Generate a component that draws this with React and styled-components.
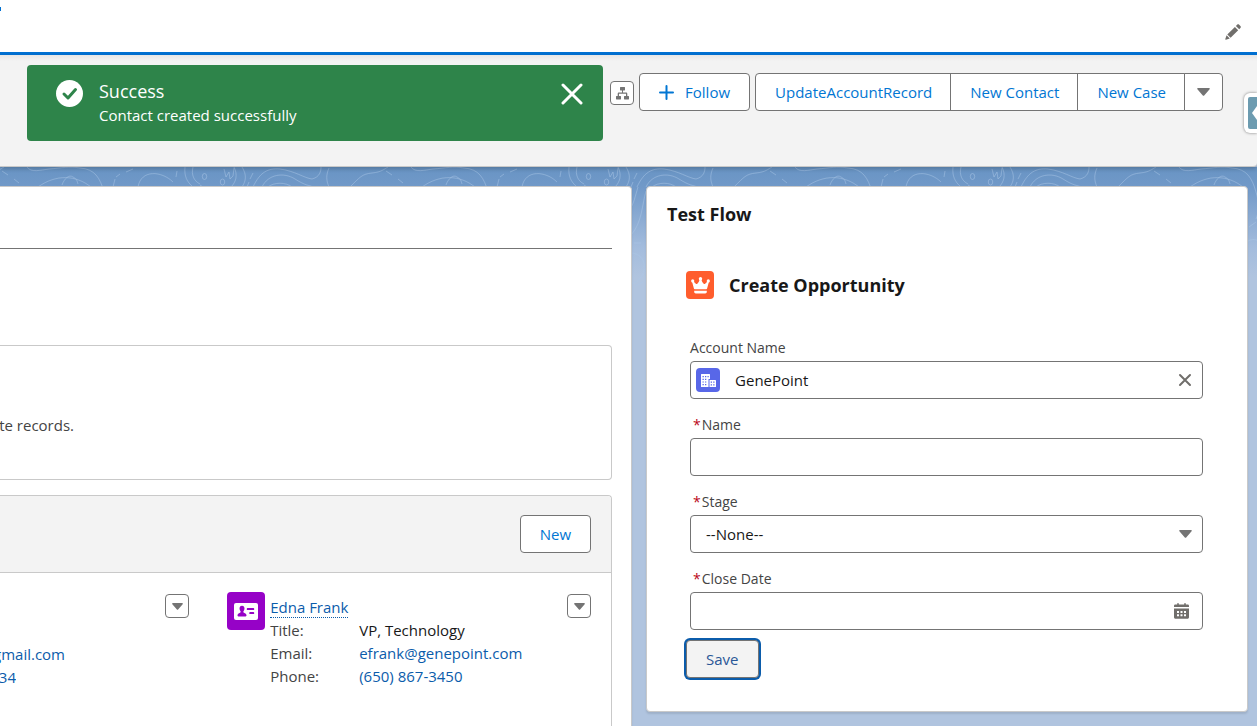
import React from "react";
import styled, { createGlobalStyle, css } from "styled-components";

const GlobalStyle = createGlobalStyle`
  * { box-sizing: border-box; }
  body {
    margin: 0;
    font-family: "Segoe UI", "Open Sans", "Noto Sans", sans-serif;
    font-size: 15px;
    line-height: 24px;
    color: #181818;
    background: #b0c4df;
  }
  button, input, select { font: inherit; color: inherit; }
  button { cursor: pointer; }
  svg { display: block; }
`;

const Page = styled.div`
  min-height: 100vh;
  display: flex;
  flex-direction: column;
  position: relative;
  overflow: hidden;
`;

const NavBar = styled.header`
  height: 55px;
  display: flex;
  justify-content: space-between;
  background: #fff;
  border-bottom: 3px solid #0070d2;
`;

const TabMark = styled.span`
  width: 1px;
  height: 4px;
  margin-top: 7px;
  background: #0070d2;
`;

const PlainButton = styled.button`
  display: flex;
  align-items: center;
  justify-content: center;
  padding: 0;
  border: 0;
  background: none;
  color: ${(p) => p.$color || "#706e6b"};
`;

const EditNav = styled(PlainButton)`
  width: 16px;
  height: 16px;
  margin: 24px 16px 0 0;
`;

const RecordHeader = styled.section`
  height: 112px;
  display: flex;
  justify-content: flex-end;
  align-items: flex-start;
  gap: 5px;
  padding: 18px 34px 0 0;
  position: relative;
  z-index: 1;
  background: linear-gradient(#e6e6e6, #f3f3f3 6px);
  border-bottom: 1px solid #c9c9c9;
  border-bottom-right-radius: 4px;
  box-shadow: 0 2px 4px rgba(0, 0, 0, 0.2);
`;

const buttonFace = css`
  background: #fff;
  border: 1px solid #747474;
  border-radius: 4px;
`;

const IconButton = styled.button`
  ${buttonFace}
  width: 24px;
  height: 24px;
  padding: 0;
  display: flex;
  flex: none;
  align-items: center;
  justify-content: center;
  color: #747474;
`;

const HierarchyButton = styled(IconButton)`
  margin-top: 8px;
`;

const Button = styled.button`
  ${buttonFace}
  height: 38px;
  padding: 0 19px;
  display: flex;
  align-items: center;
  gap: 11px;
  color: #0176d3;
  white-space: nowrap;
`;

const ButtonGroup = styled.div`
  display: flex;

  ${Button} {
    border-radius: 0;
    margin-left: -1px;
    padding: 0 18px 0 19px;
  }
  ${Button}:first-child {
    margin-left: 0;
    border-radius: 4px 0 0 4px;
  }
  ${Button}:last-child {
    border-radius: 0 4px 4px 0;
    padding: 0 12px;
    color: #747474;
  }
`;

const Toast = styled.div`
  position: absolute;
  z-index: 3;
  top: 65px;
  left: 27px;
  width: 576px;
  height: 76px;
  display: flex;
  align-items: flex-start;
  padding: 15px 20px 0 29px;
  border-radius: 4px;
  background: #2e844a;
  color: #fff;
`;

const ToastText = styled.div`
  flex: 1;
  margin-left: 16px;
`;

const ToastTitle = styled.h2`
  margin: 0;
  font-size: 18px;
  line-height: 23px;
  font-weight: 400;
`;

const ToastMessage = styled.p`
  margin: 0;
`;

const ToastClose = styled(PlainButton)`
  width: 22px;
  height: 28px;
`;

const SideTab = styled.button`
  position: absolute;
  z-index: 3;
  top: 93px;
  right: 0;
  width: 13px;
  height: 40px;
  padding: 4px 0 4px 4px;
  border: 0;
  border-radius: 6px 0 0 6px;
  background: #fff;
  box-shadow: 0 0 3px rgba(0, 0, 0, 0.5);
`;

const SideTabFace = styled.span`
  display: flex;
  align-items: center;
  height: 32px;
  border-radius: 2px 0 0 2px;
  background: #6c9bb0;
`;

const Main = styled.main`
  flex: 1;
  display: grid;
  grid-template-columns: minmax(0, 21fr) minmax(0, 20fr);
  gap: 14px;
  padding: 19px 9px 0 0;
  position: relative;
  background: linear-gradient(#6894c4, #7199c8 20px, #a3bcdd 80px, #b0c4df 110px);
`;

const Backdrop = styled.svg`
  position: absolute;
  top: 0;
  left: 0;
  width: 100%;
  height: 130px;
`;

const Card = styled.section`
  position: relative;
  background: #fff;
  border: 1px solid #c9c9c9;
  border-radius: 4px;
  box-shadow: 0 2px 2px rgba(0, 0, 0, 0.1);
`;

const DetailCard = styled(Card)`
  display: flex;
  flex-direction: column;
  padding-right: 19px;
  border-left: 0;
  border-bottom: 0;
  border-radius: 0 4px 0 0;
`;

const TabRule = styled.div`
  height: 62px;
  border-bottom: 1px solid #747474;
`;

const NoticeBox = styled.div`
  height: 135px;
  margin: 96px 0 15px;
  padding-top: 67px;
  border: 1px solid #c9c9c9;
  border-left: 0;
  border-radius: 0 4px 4px 0;
  color: #444;
`;

const Clipped = styled.div`
  display: flex;
  justify-content: flex-end;
  width: ${(p) => p.$width}px;
  height: 23px;
  overflow: hidden;
  white-space: nowrap;
`;

const RelatedList = styled.div`
  flex: 1;
  border: 1px solid #c9c9c9;
  border-width: 1px 1px 0 0;
  border-radius: 0 4px 0 0;
`;

const RelatedHeader = styled.div`
  display: flex;
  justify-content: flex-end;
  padding: 19px 20px;
  background: #f3f3f3;
  border-bottom: 1px solid #c9c9c9;
  border-radius: 0 4px 0 0;
`;

const Tiles = styled.div`
  display: grid;
  grid-template-columns: minmax(0, 13fr) minmax(0, 25fr);
  gap: 38px;
  padding: 19px 20px 0 0;
`;

const Tile = styled.article`
  display: flex;
  align-items: flex-start;
  justify-content: space-between;
`;

const TileMenu = styled(IconButton)`
  margin-top: 2px;
`;

const CutColumn = styled.div`
  padding-top: 50px;
`;

const ObjectBadge = styled.span`
  flex: none;
  display: flex;
  align-items: center;
  justify-content: center;
  width: ${(p) => p.$size}px;
  height: ${(p) => p.$size}px;
  border-radius: 4px;
  background: ${(p) => p.$color};
`;

const ContactInfo = styled.div`
  flex: 1;
  min-width: 0;
  padding: 3px 0 0 5px;
`;

const Link = styled.a`
  color: #0b5cab;
  text-decoration: none;
`;

const ContactName = styled(Link)`
  display: inline-block;
  line-height: 20px;
  border-bottom: 1px dotted #0b5cab;
`;

const Facts = styled.dl`
  display: grid;
  grid-template-columns: 84px 1fr;
  column-gap: 5px;
  margin: 0;
  line-height: 23px;

  dt { color: #444; }
  dd { margin: 0; }
`;

const NameLine = styled.div`
  height: 24px;
`;

const FlowCard = styled(Card)`
  align-self: start;
  margin-bottom: 14px;
  padding: 14px 40px 33px 39px;
`;

const CardTitle = styled.h2`
  margin: 0 0 44px -19px;
  font-size: 18px;
  line-height: 26px;
  font-weight: 700;
`;

const FlowHeading = styled.div`
  display: flex;
  align-items: center;
  gap: 15px;
  margin-bottom: 37px;

  h3 {
    margin: 0;
    font-size: 18px;
    line-height: 28px;
    font-weight: 700;
  }
`;

const Field = styled.div`
  margin: 0 4px 14px;
`;

const Label = styled.label`
  display: block;
  height: 25px;
  font-size: 14px;
  line-height: 24px;
  color: #444;
  padding-left: ${(p) => (p.$required ? 3 : 0)}px;
`;

const Required = styled.abbr`
  margin-right: 1px;
  color: #ba0517;
`;

const Control = styled.div`
  ${buttonFace}
  position: relative;
  display: flex;
  align-items: center;
  height: 38px;
  padding: 0 ${(p) => p.$right || 0}px 0 ${(p) => p.$left || 0}px;
`;

const TextInput = styled.input`
  flex: 1;
  min-width: 0;
  height: 36px;
  padding: 0 15px;
  border: 0;
  outline: 0;
  background: none;
`;

const Select = styled.select`
  flex: 1;
  height: 36px;
  padding: 0 15px;
  border: 0;
  outline: 0;
  appearance: none;
  background: none;
`;

const SelectArrow = styled.span`
  position: absolute;
  right: 10px;
  color: #747474;
  pointer-events: none;
`;

const SaveButton = styled(Button)`
  margin-top: -4px;
  background: #f3f3f3;
  color: #2a5797;
  box-shadow: 0 0 0 2px #0b5cab;
`;

const Caret = ({ width = 11 }) => (
  <svg width={width} height={Math.round(width * 0.62)} viewBox="0 0 13 8" fill="currentColor" aria-hidden="true">
    <path d="M1 0h11c.8 0 1.100.6.600 1.200L7.200 7.400c-.4.500-1 .5-1.400 0L.4 1.200C-.1.600.2 0 1 0z" />
  </svg>
);

const Cross = ({ size, stroke }) => (
  <svg width={size} height={size} viewBox={`0 0 ${size} ${size}`} aria-hidden="true">
    <path
      d={`M2 2L${size - 2} ${size - 2}M${size - 2} 2L2 ${size - 2}`}
      stroke="currentColor"
      strokeWidth={stroke}
      strokeLinecap="round"
    />
  </svg>
);

const PencilIcon = () => (
  <svg width="16" height="16" viewBox="0 0 16 16" fill="currentColor" aria-hidden="true">
    <path d="M9.900 2.900l3.300 3.300-7.600 7.600-3.300-3.300zM10.900 1.900l1.200-1.200c.6-.6 1.500-.6 2.100 0l1.200 1.200c.6.600.6 1.500 0 2.100l-1.200 1.200zM1.600 11.300l3.200 3.200-3.900 1.200c-.4.100-.7-.2-.6-.6z" />
  </svg>
);

const CheckIcon = () => (
  <svg width="27" height="27" viewBox="0 0 27 27" aria-hidden="true">
    <circle cx="13.500" cy="13.500" r="13.500" fill="#fff" />
    <path d="M8 14l4 4 7.500-8.500" fill="none" stroke="#2e844a" strokeWidth="3" strokeLinecap="round" strokeLinejoin="round" />
  </svg>
);

const HierarchyIcon = () => (
  <svg width="13" height="13" viewBox="0 0 13 13" fill="currentColor" aria-hidden="true">
    <path d="M4.500 0h4c.4 0 .5.200.5.500v2.500c0 .3-.2.500-.5.500H7v2h3c.8 0 1.300.5 1.300 1.300V9h1.200c.3 0 .5.200.5.500v2.500c0 .3-.2.500-.5.500h-4c-.3 0-.5-.2-.5-.5V9.500c0-.3.200-.5.500-.5H10V6.800H3V9h1.500c.3 0 .5.200.5.500V12c0 .3-.2.500-.5.500h-4c-.3 0-.5-.2-.5-.5V9.500c0-.3.200-.5.500-.5h1.200V6.800c0-.8.500-1.300 1.300-1.300h3v-2H4.500c-.3 0-.5-.2-.5-.5V.5c0-.3.200-.5.500-.5z" />
  </svg>
);

const PlusIcon = () => (
  <svg width="15" height="15" viewBox="0 0 15 15" aria-hidden="true">
    <path d="M7.500 1v13M1 7.500h13" stroke="currentColor" strokeWidth="2" strokeLinecap="round" />
  </svg>
);

const CrownIcon = () => (
  <svg width="19" height="17" viewBox="0 0 19 17" fill="#fff" aria-hidden="true">
    <circle cx="1.700" cy="3.900" r="1.600" />
    <circle cx="9.500" cy="1.700" r="1.700" />
    <circle cx="17.300" cy="3.900" r="1.600" />
    <path d="M1 4.500h1.500l2.600 2.400c.4.300.9.200 1.200-.2C7.600 5.500 8.300 4 8.700 2h1.600c.4 2 1.100 3.500 2.400 4.700.3.400.8.500 1.200.2l2.600-2.400H18l-1.900 7c-.1.500-.4.700-.8.700H3.700c-.4 0-.7-.2-.8-.7zM3.200 13.800h12.600v.9c0 1-.6 1.700-1.600 1.700H4.800c-1 0-1.600-.7-1.600-1.700z" />
  </svg>
);

const AccountIcon = () => (
  <svg width="15" height="13" viewBox="0 0 15 13" aria-hidden="true">
    <path d="M.5 0h8c.3 0 .5.200.5.500V5H7.500v8H0V.5C0 .2.200 0 .5 0zM8.500 6h5.800c.4 0 .7.300.7.700V13H8.500z" fill="#fff" />
    <path d="M1.500 2h1.300v1.200H1.500zM4 2h1.300v1.200H4zM6.500 2h1.200v1.200H6.500zM1.500 4.700h1.300v1.200H1.500zM4 4.700h1.300v1.200H4zM1.500 7.400h1.300v1.200H1.500zM4 7.400h1.300v1.200H4zM1.500 10h1.300v1.200H1.500zM4 10h1.300v1.200H4zM9.700 7.600H11v1.200H9.700zM12.200 7.600h1.300v1.200h-1.300zM9.700 10.200H11v1.200H9.700zM12.200 10.200h1.300v1.200h-1.300z" fill="#5867e8" />
  </svg>
);

const ContactIcon = () => (
  <svg width="24" height="17" viewBox="0 0 24 17" aria-hidden="true">
    <rect width="24" height="17" rx="2" fill="#fff" />
    <path d="M8 2.800c1.600 0 2.500 1.200 2.500 2.800 0 1-.4 2-1 2.700-.4.600-.1 1.200.5 1.400 1.400.6 2.500 1.200 2.500 2.600 0 .7-.3 1.200-.9 1.200H4.400c-.6 0-.9-.5-.9-1.200 0-1.400 1.100-2 2.500-2.600.6-.2.900-.8.500-1.400-.6-.7-1-1.700-1-2.700 0-1.600.9-2.800 2.500-2.800zM13.500 5h6c.4 0 .7.300.7.700v.8c0 .3-.3.600-.7.600h-6c-.4 0-.7-.3-.7-.6v-.8c0-.4.300-.7.700-.7zM16 9h3.500c.4 0 .7.300.7.700v.8c0 .3-.3.600-.7.600H16c-.4 0-.7-.3-.7-.6v-.8c0-.4.300-.7.700-.7z" fill="#9602c7" />
  </svg>
);

const CalendarIcon = () => (
  <svg width="15" height="16" viewBox="0 0 15 16" aria-hidden="true">
    <path
      fill="currentColor"
      fillRule="evenodd"
      d="M3.200.8c0-1 1.600-1 1.600 0v.8h5.400V.8c0-1 1.600-1 1.600 0v.8h1.700c.8 0 1.500.5 1.500 1.300V4H0V2.900c0-.8.700-1.300 1.500-1.300h1.700zM0 5.600h15v8.700c0 .9-.7 1.500-1.500 1.500h-12C.7 15.800 0 15.200 0 14.300zM3 8v2h2V8zM6.500 8v2h2V8zM10 8v2h2V8zM3 11.300v2h2v-2zM6.500 11.300v2h2v-2zM10 11.300v2h2v-2z"
    />
  </svg>
);

const Contours = () => (
  <Backdrop aria-hidden="true">
    <defs>
      <pattern id="contours" x="200" y="0" width="384" height="130" patternUnits="userSpaceOnUse">
        <g fill="none" stroke="#a9c6e6" strokeOpacity="0.5" strokeWidth="1">
          <ellipse cx="4.500" cy="9.500" rx="2.200" ry="3" />
          <ellipse cx="22.500" cy="15" rx="2.200" ry="3" />
          <path d="M24 2l2 8 3-5 1 7 3-3 1-8M34 0c4 8 2 15-3 20M42 0c5 8 4 14 0 20" />
          <path d="M53 6l-3 6M49 15l-2 5M0 18l3 2" />
          <path d="M53 20C60 5 68 1 80 2c15 2 24 9 32 10 8-2 9-8 9-12" />
          <path d="M62 20c6-13 22-15 33-8s14 6 18 8M68 20c6-5 18-5 24 0" />
          <path d="M129 1c-3 7-3 12 0 19" />
          <path d="M150 20c10-10 12-13 22-14s12-4 16-6" />
          <path d="M186 4l6 4M198 12l5 4" />
          <path d="M211 0c4 6 14 3 22 2 13-1 20-3 31-1 15 1 20 10 24 24 3 10 4 18 0 27" />
          <path d="M246 18c2-6 7-11 11-8 4 2 4 4 5 7M222 20c18-13 38-12 53 0" />
          <path d="M297 20l2-8M300 10l4-3M310 5l7-3M361 4l-1 6" />
          <path d="M322 20c3-18 24-16 35-5" />
          <path d="M369 0c-1 9 2 15 8 20M377 0c-2 8 1 14 7 17" />
          <path d="M62 24C58 38 58 56 47 68M54 20c-3 10-4 16-8 22" />
          <path d="M50 76h7M47 86c18 1 18 26 0 31M51 119l8-4" />
          <path d="M281 60l7-5M280 74c4-2 7-2 10 0" />
        </g>
      </pattern>
    </defs>
    <rect width="100%" height="130" fill="url(#contours)" />
  </Backdrop>
);

const FormField = ({ id, label, required, left, right, children }) => (
  <Field>
    <Label htmlFor={id} $required={required}>
      {required && <Required>*</Required>}
      {label}
    </Label>
    <Control $left={left} $right={right}>
      {children}
    </Control>
  </Field>
);

export default function App() {
  return (
    <Page>
      <GlobalStyle />
      <NavBar>
        <TabMark />
        <EditNav type="button" aria-label="Edit navigation">
          <PencilIcon />
        </EditNav>
      </NavBar>

      <RecordHeader>
        <HierarchyButton type="button" aria-label="View account hierarchy">
          <HierarchyIcon />
        </HierarchyButton>
        <Button type="button">
          <PlusIcon />
          Follow
        </Button>
        <ButtonGroup>
          <Button type="button">UpdateAccountRecord</Button>
          <Button type="button">New Contact</Button>
          <Button type="button">New Case</Button>
          <Button type="button" aria-label="More actions">
            <Caret width={13} />
          </Button>
        </ButtonGroup>
      </RecordHeader>

      <Toast role="status">
        <CheckIcon />
        <ToastText>
          <ToastTitle>Success</ToastTitle>
          <ToastMessage>Contact created successfully</ToastMessage>
        </ToastText>
        <ToastClose type="button" aria-label="Close" $color="#fff">
          <Cross size={22} stroke={3} />
        </ToastClose>
      </Toast>

      <SideTab type="button" aria-label="Open side panel">
        <SideTabFace>
          <svg width="9" height="16" viewBox="0 0 9 16" aria-hidden="true">
            <path d="M4 8l5-7v14z" fill="#fff" />
          </svg>
        </SideTabFace>
      </SideTab>

      <Main>
        <Contours />
        <DetailCard>
          <TabRule />
          <NoticeBox>
            <Clipped $width={74}>ate records.</Clipped>
          </NoticeBox>
          <RelatedList>
            <RelatedHeader>
              <Button type="button">New</Button>
            </RelatedHeader>
            <Tiles>
              <Tile>
                <CutColumn>
                  <Clipped $width={65}>
                    <Link href="#email">gmail.com</Link>
                  </Clipped>
                  <Clipped $width={16}>
                    <Link href="#phone">34</Link>
                  </Clipped>
                </CutColumn>
                <TileMenu type="button" aria-label="Contact actions">
                  <Caret />
                </TileMenu>
              </Tile>
              <Tile>
                <ObjectBadge $size={38} $color="#9602c7">
                  <ContactIcon />
                </ObjectBadge>
                <ContactInfo>
                  <NameLine>
                    <ContactName href="#edna-frank">Edna Frank</ContactName>
                  </NameLine>
                  <Facts>
                    <dt>Title:</dt>
                    <dd>VP, Technology</dd>
                    <dt>Email:</dt>
                    <dd>
                      <Link href="mailto:efrank@genepoint.com">efrank@genepoint.com</Link>
                    </dd>
                    <dt>Phone:</dt>
                    <dd>
                      <Link href="tel:6508673450">(650) 867-3450</Link>
                    </dd>
                  </Facts>
                </ContactInfo>
                <TileMenu type="button" aria-label="Edna Frank actions">
                  <Caret />
                </TileMenu>
              </Tile>
            </Tiles>
          </RelatedList>
        </DetailCard>

        <FlowCard>
          <CardTitle>Test Flow</CardTitle>
          <FlowHeading>
            <ObjectBadge $size={28} $color="#ff5d2d">
              <CrownIcon />
            </ObjectBadge>
            <h3>Create Opportunity</h3>
          </FlowHeading>
          <form onSubmit={(e) => e.preventDefault()}>
            <FormField id="account" label="Account Name" left={5} right={10}>
              <ObjectBadge $size={24} $color="#5867e8">
                <AccountIcon />
              </ObjectBadge>
              <TextInput id="account" defaultValue="GenePoint" />
              <PlainButton type="button" aria-label="Clear account">
                <Cross size={14} stroke={2} />
              </PlainButton>
            </FormField>
            <FormField id="name" label="Name" required>
              <TextInput id="name" />
            </FormField>
            <FormField id="stage" label="Stage" required>
              <Select id="stage">
                <option>--None--</option>
              </Select>
              <SelectArrow>
                <Caret width={13} />
              </SelectArrow>
            </FormField>
            <FormField id="close-date" label="Close Date" required right={13}>
              <TextInput id="close-date" />
              <PlainButton type="button" aria-label="Pick a date">
                <CalendarIcon />
              </PlainButton>
            </FormField>
            <SaveButton type="submit">Save</SaveButton>
          </form>
        </FlowCard>
      </Main>
    </Page>
  );
}
